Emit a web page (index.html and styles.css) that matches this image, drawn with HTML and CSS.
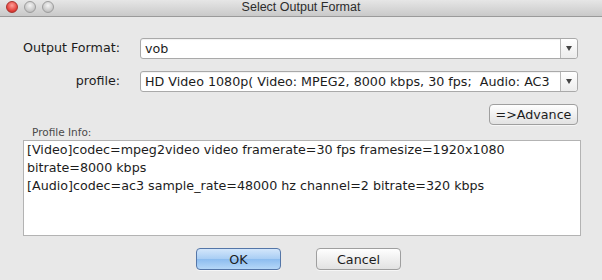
FILE: index.html
```html
<!DOCTYPE html>
<html lang="en">
<head>
<meta charset="UTF-8">
<title>Select Output Format</title>
<link rel="stylesheet" href="styles.css">
</head>
<body>

<div class="window">
    <div class="titlebar">
        <div class="lights">
            <span class="light red"></span>
            <span class="light"></span>
            <span class="light"></span>
        </div>
        <div class="title">Select Output Format</div>
    </div>

    <div class="content">
        <div class="form">
            <label class="lbl">Output Format:</label>
            <div class="combo">
                <span class="combo-text">vob</span>
                <span class="combo-arrow"></span>
            </div>
            <label class="lbl">profile:</label>
            <div class="combo">
                <span class="combo-text">HD Video 1080p( Video: MPEG2, 8000 kbps, 30 fps;&nbsp; Audio: AC3</span>
                <span class="combo-arrow"></span>
            </div>
        </div>

        <div class="advance-row">
            <button class="btn advance">=&gt;Advance</button>
        </div>

        <div class="info-label">Profile Info:</div>
        <div class="info">
            <div>[Video]codec=mpeg2video video framerate=30 fps framesize=1920x1080</div>
            <div>bitrate=8000 kbps</div>
            <div>[Audio]codec=ac3 sample_rate=48000 hz channel=2 bitrate=320 kbps</div>
        </div>

        <div class="actions">
            <button class="btn ok">OK</button>
            <button class="btn">Cancel</button>
        </div>
    </div>
</div>

</body>
</html>
```

FILE: styles.css
```css
/* ─── Base ───────────────────────────────────────────────────── */
*{box-sizing:border-box;margin:0}
body{
    font-family:"DejaVu Sans","Liberation Sans",sans-serif;
    font-size:12.7px;color:#1c1c1c;
    background:#e8e8e8;
    width:602px;height:280px;overflow:hidden;
}
.window{display:flex;flex-direction:column;height:100%}

/* ─── Title bar ──────────────────────────────────────────────── */
.titlebar{
    height:17px;flex:none;
    display:flex;align-items:center;position:relative;
    background:linear-gradient(#e6e6e6,#c9c9c9);
    border-bottom:1px solid #9a9a9a;
}
.lights{display:flex;gap:6px;padding-left:6px;margin-top:-2px}
.light{
    width:12px;height:12px;border-radius:50%;
    background:radial-gradient(circle at 50% 35%,#f4f4f4,#c4c4c4 70%,#a8a8a8);
    border:1px solid #9d9d9d;
}
.light.red{
    background:radial-gradient(circle at 50% 35%,#ff9e98,#e2403a 65%,#b42620);
    border-color:#a8322d;
}
.title{
    position:absolute;left:0;right:0;top:0;
    text-align:center;font-family:"Liberation Sans",sans-serif;
    font-size:12.5px;line-height:14px;color:#2c2c2c;
}

/* ─── Form ───────────────────────────────────────────────────── */
.content{padding:21px 21px 0 23px;display:flex;flex-direction:column}
.form{
    display:grid;grid-template-columns:117px 1fr;
    column-gap:20px;row-gap:12px;padding-right:3px;
    margin-left:-20px;
}
.lbl{text-align:right;align-self:center;padding-bottom:2px;white-space:nowrap}
.combo{
    height:21px;display:flex;align-items:stretch;
    background:#fff;border:1px solid #a9a9a9;border-radius:3px;
    box-shadow:inset 0 1px 1px rgba(0,0,0,.06);
}
.combo-text{flex:1;padding:0 4px;line-height:19px;white-space:nowrap;overflow:hidden}
.combo-arrow{
    width:17px;border-left:1px solid #b8b8b8;
    background:linear-gradient(#fff,#ececec);border-radius:0 3px 3px 0;
    display:flex;align-items:center;justify-content:center;
}
.combo-arrow::after{
    content:"";border-left:3px solid transparent;border-right:3px solid transparent;
    border-top:5px solid #444;
}

/* ─── Buttons ────────────────────────────────────────────────── */
.btn{
    font-family:inherit;font-size:12.7px;color:#1c1c1c;
    height:21px;padding:0;
    border:1px solid #9f9f9f;border-radius:4px;
    background:linear-gradient(#fff,#f0f0f0 50%,#e2e2e2);
    box-shadow:0 1px 0 rgba(255,255,255,.6);
}
.advance-row{display:flex;justify-content:flex-end;margin-top:12px;padding-right:3px}
.advance{width:89px}

/* ─── Profile info ───────────────────────────────────────────── */
.info-label{font-size:10.5px;color:#4a4a4a;margin:1px 0 0 9px;line-height:13px}
.info{
    height:96px;margin-top:1px;
    background:#fff;border:1px solid #b3b3b3;
    padding:0 3px;line-height:18px;
}

/* ─── Actions ────────────────────────────────────────────────── */
.actions{display:flex;justify-content:center;gap:35px;margin-top:12px;padding-right:7px}
.actions .btn{width:85px;height:22px}
.btn.ok{
    border-color:#5476a8;
    background:linear-gradient(#d3e6fb,#a8cdf4 50%,#8cbcef 51%,#b5d7f8);
}
```
